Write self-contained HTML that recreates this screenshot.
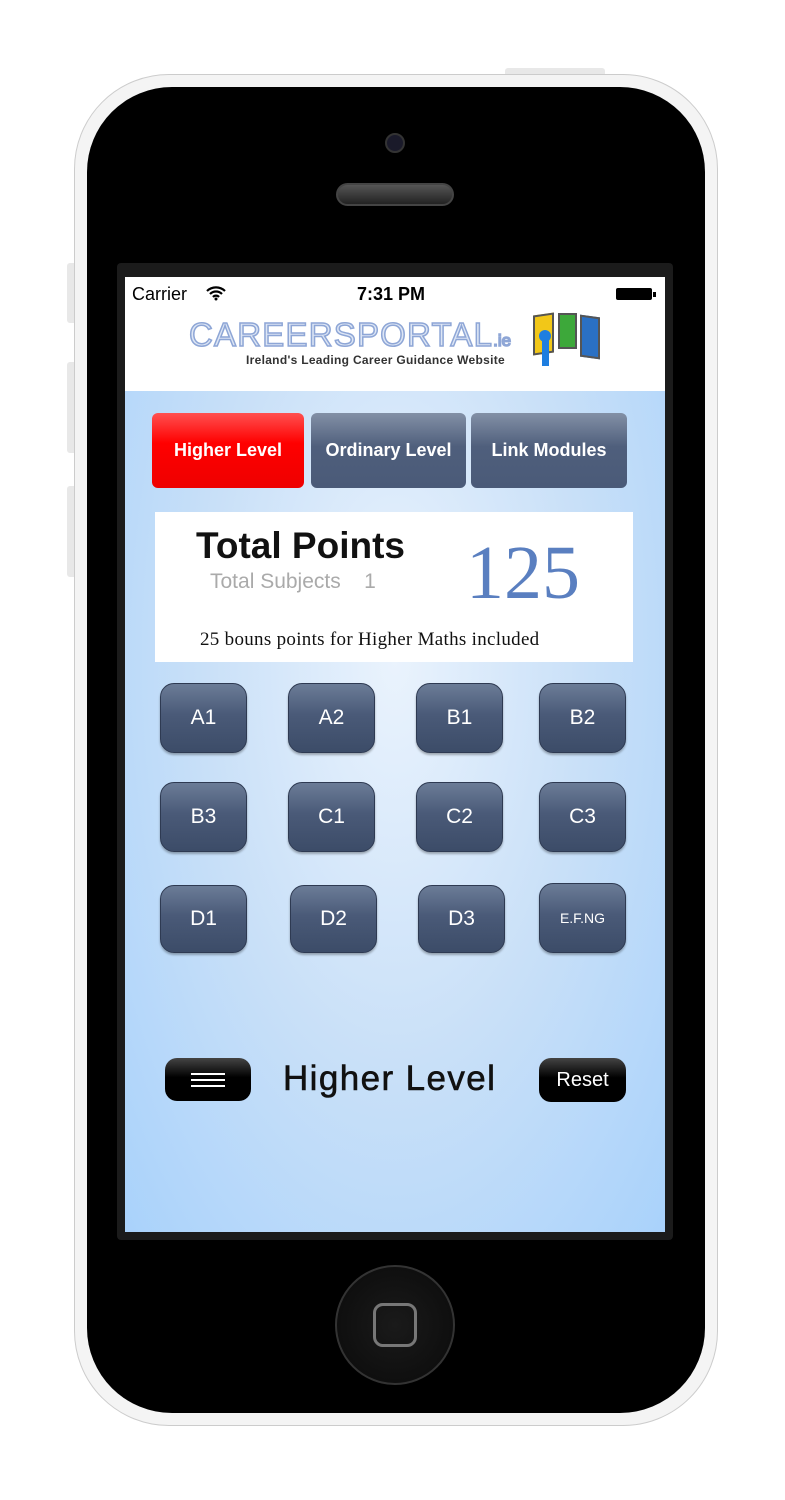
<!DOCTYPE html>
<html><head><style>
*{margin:0;padding:0;box-sizing:border-box}
body{width:785px;height:1500px;background:#fff;position:relative;overflow:hidden;font-family:"Liberation Sans",sans-serif}
.a{position:absolute}
.btn{position:absolute;border-radius:14px;background:linear-gradient(#6b7c97,#4a5a78 45%,#3c4c68);border:1px solid #2e3a52;color:#fff;font-size:21px;display:flex;align-items:center;justify-content:center;box-shadow:0 2px 2px rgba(0,0,0,.3)}
.tab{position:absolute;top:413px;height:75px;border-radius:6px;color:#fff;font-weight:bold;font-size:18px;display:flex;align-items:center;justify-content:center}
.blk{position:absolute;border-radius:12px;background:linear-gradient(#444,#000 45%,#000);color:#fff;display:flex;align-items:center;justify-content:center}
</style></head><body>
<div class="a" style="left:505px;top:68px;width:100px;height:10px;background:#e8e8e8;border-radius:3px"></div>
<div class="a" style="left:67px;top:263px;width:10px;height:60px;background:#e8e8e8;border-radius:3px"></div>
<div class="a" style="left:67px;top:362px;width:10px;height:91px;background:#e8e8e8;border-radius:3px"></div>
<div class="a" style="left:67px;top:486px;width:10px;height:91px;background:#e8e8e8;border-radius:3px"></div>
<div class="a" style="left:74px;top:74px;width:644px;height:1352px;background:#f4f4f4;border:1px solid #ccc;border-radius:95px"></div>
<div class="a" style="left:87px;top:87px;width:618px;height:1326px;background:#000;border-radius:85px"></div>
<div class="a" style="left:385px;top:133px;width:20px;height:20px;border-radius:50%;background:#1a1a2a;border:2px solid #333"></div>
<div class="a" style="left:336px;top:183px;width:118px;height:23px;border-radius:12px;background:linear-gradient(#555,#222);border:2px solid #444"></div>
<div class="a" style="left:335px;top:1265px;width:120px;height:120px;border-radius:50%;background:radial-gradient(#1a1a1a,#0a0a0a);border:2px solid #333"></div>
<div class="a" style="left:373px;top:1303px;width:44px;height:44px;border-radius:10px;border:3px solid #777"></div>
<div class="a" style="left:117px;top:263px;width:556px;height:977px;background:#1b1b1b;border-radius:4px"></div>
<div class="a" style="left:125px;top:277px;width:540px;height:955px;background:radial-gradient(ellipse at 50% 40%,#eaf3fd 0%,#c9e0f8 50%,#a9d2fb 100%)"></div>
<div class="a" style="left:125px;top:277px;width:540px;height:114px;background:#fff"></div>
<div class="a" style="left:132px;top:284px;font-size:18px">Carrier</div>
<svg class="a" style="left:205px;top:285px" width="22" height="16" viewBox="0 0 22 16"><path d="M2 6a13 13 0 0 1 18 0M5 9a8.5 8.5 0 0 1 12 0M8 12a4 4 0 0 1 6 0" stroke="#000" stroke-width="2.2" fill="none"/><circle cx="11" cy="14" r="1.5"/></svg>
<div class="a" style="left:357px;top:284px;font-size:18px;font-weight:bold">7:31 PM</div>
<div class="a" style="left:616px;top:288px;width:36px;height:12px;background:#000;border-radius:2px"></div>
<div class="a" style="left:653px;top:292px;width:3px;height:5px;background:#000"></div>
<div class="a" style="left:189px;top:316px;font-size:33px;color:#dde6f5;-webkit-text-stroke:1.5px #8ea6d6;line-height:38px;white-space:nowrap;letter-spacing:1.2px">CAREERSPORTAL<span style="font-size:17px;letter-spacing:0">.ie</span></div>
<div class="a" style="left:246px;top:353px;font-size:12px;font-weight:bold;color:#333;white-space:nowrap;letter-spacing:0.3px">Ireland's Leading Career Guidance Website</div>
<div class="a" style="left:533px;top:314px;width:21px;height:40px;background:#f2c718;border:2px solid #555;transform:skewY(-8deg)"></div>
<div class="a" style="left:558px;top:313px;width:19px;height:36px;background:#3da83a;border:2px solid #555"></div>
<div class="a" style="left:580px;top:316px;width:20px;height:42px;background:#2a70c4;border:2px solid #555;transform:skewY(8deg)"></div>
<div class="a" style="left:539px;top:330px;width:12px;height:12px;border-radius:50%;background:#1e7ee0"></div>
<div class="a" style="left:542px;top:340px;width:7px;height:26px;background:#1e7ee0"></div>
<div class="tab" style="left:152px;width:152px;background:linear-gradient(#ff5050,#ff0000 40%,#ee0000)">Higher Level</div>
<div class="tab" style="left:311px;width:155px;background:linear-gradient(#8390a6,#4f5f7c 45%,#4a5a78)">Ordinary Level</div>
<div class="tab" style="left:471px;width:156px;background:linear-gradient(#8390a6,#4f5f7c 45%,#4a5a78)">Link Modules</div>
<div class="a" style="left:155px;top:512px;width:478px;height:150px;background:#fff"></div>
<div class="a" style="left:196px;top:525px;font-size:37px;font-weight:bold;color:#111">Total Points</div>
<div class="a" style="left:210px;top:570px;font-size:21px;color:#aaa">Total Subjects&nbsp;&nbsp;&nbsp;&nbsp;1</div>
<div class="a" style="left:466px;top:530px;font-size:76px;font-family:'Liberation Serif',serif;color:#5a7fc0;line-height:86px">125</div>
<div class="a" style="left:200px;top:629px;font-size:19px;font-family:'Liberation Serif',serif;color:#111;letter-spacing:0.3px">25 bouns points for Higher Maths included</div>
<div class="btn" style="left:160px;top:683px;width:87px;height:70px">A1</div>
<div class="btn" style="left:288px;top:683px;width:87px;height:70px">A2</div>
<div class="btn" style="left:416px;top:683px;width:87px;height:70px">B1</div>
<div class="btn" style="left:539px;top:683px;width:87px;height:70px">B2</div>
<div class="btn" style="left:160px;top:782px;width:87px;height:70px">B3</div>
<div class="btn" style="left:288px;top:782px;width:87px;height:70px">C1</div>
<div class="btn" style="left:416px;top:782px;width:87px;height:70px">C2</div>
<div class="btn" style="left:539px;top:782px;width:87px;height:70px">C3</div>
<div class="btn" style="left:160px;top:885px;width:87px;height:68px">D1</div>
<div class="btn" style="left:290px;top:885px;width:87px;height:68px">D2</div>
<div class="btn" style="left:418px;top:885px;width:87px;height:68px">D3</div>
<div class="btn" style="left:539px;top:883px;width:87px;height:70px;font-size:14px">E.F.NG</div>
<div class="blk" style="left:165px;top:1058px;width:86px;height:43px"><div style="width:34px;height:14px;border-top:2px solid #fff;border-bottom:2px solid #fff;position:relative"><div style="position:absolute;top:4px;left:0;width:34px;height:2px;background:#fff"></div></div></div>
<div class="a" style="left:283px;top:1059px;font-size:35px;color:#111;-webkit-text-stroke:0.6px #111;letter-spacing:1.4px">Higher Level</div>
<div class="blk" style="left:539px;top:1058px;width:87px;height:44px;font-size:20px">Reset</div>
</body></html>
